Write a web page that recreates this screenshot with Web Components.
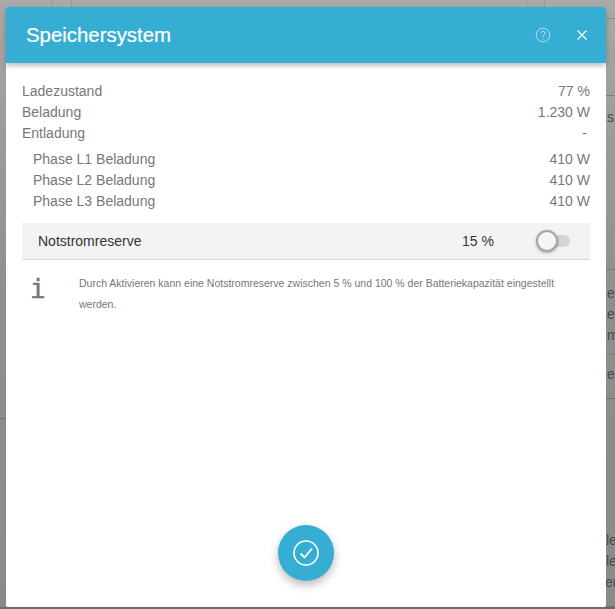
<!DOCTYPE html>
<html>
<head>
<meta charset="utf-8">
<title>Speichersystem</title>
<style>
    html, body { margin: 0; height: 100%; overflow: hidden; }
    body { font-family: "Liberation Sans", Arial, sans-serif; }
</style>
</head>
<body>
<page-backdrop>
    <storage-dialog heading="Speichersystem">
        <value-row label="Ladezustand" value="77 %"></value-row>
        <value-row label="Beladung" value="1.230 W"></value-row>
        <value-row label="Entladung" value="- " class="last"></value-row>
        <value-row label="Phase L1 Beladung" value="410 W" sub></value-row>
        <value-row label="Phase L2 Beladung" value="410 W" sub></value-row>
        <value-row label="Phase L3 Beladung" value="410 W" sub></value-row>
        <reserve-row label="Notstromreserve" value="15 %"></reserve-row>
        <info-note>Durch Aktivieren kann eine Notstromreserve zwischen 5 % und 100 % der Batteriekapazität eingestellt werden.</info-note>
    </storage-dialog>
</page-backdrop>

<script>
class PageBackdrop extends HTMLElement {
    constructor() {
        super()
        this.attachShadow({ mode: 'open' })
        // the dimmed page behind the dialog, only its edges are visible
        this.shadowRoot.innerHTML = `
            <style>
            :host {
                display: block;
                position: relative;
                width: 615px;
                height: 609px;
                overflow: hidden;
                background: linear-gradient(#aaaaaa, #a2a2a2 60px, #8e8e8e 300px, #8a8a8a);
            }
            .line { position: absolute; background: #8b8b8b; }
            .h { height: 1px; }
            .v { width: 1px; top: 0; height: 7px; background: #999; }
            .peek {
                position: absolute;
                left: 607px;
                color: #4a4a4a;
                font-size: 14px;
                line-height: 16px;
                white-space: nowrap;
            }
            </style>
            <div class="line v" style="left:52px"></div>
            <div class="line v" style="left:71px"></div>
            <div class="line v" style="left:526px"></div>
            <div class="line v" style="left:544px"></div>
            <div class="line h" style="left:545px;width:70px;top:18px"></div>
            <div class="line h" style="left:606px;width:9px;top:95px;background:#7d7d7d"></div>
            <div class="line h" style="left:606px;width:9px;top:269px;background:#7d7d7d"></div>
            <div class="line h" style="left:606px;width:9px;top:354px;background:#7d7d7d"></div>
            <div class="line h" style="left:606px;width:9px;top:398px;background:#6f6f6f"></div>
            <div class="line h" style="left:0;width:6px;top:418px;background:#6f6f6f"></div>
            <div class="line h" style="left:606px;width:9px;top:606px;background:#6f6f6f"></div>
            <div class="line h" style="left:0;width:615px;top:607px;height:2px;background:#6c6c6c"></div>
            <span class="peek" style="top:109px">s</span>
            <span class="peek" style="top:285px">e</span>
            <span class="peek" style="top:306px">e</span>
            <span class="peek" style="top:327px">m</span>
            <span class="peek" style="top:366px">e</span>
            <span class="peek" style="top:532px;left:606px">le</span>
            <span class="peek" style="top:553px;left:606px">le</span>
            <span class="peek" style="top:574px;left:605px">er</span>
            <slot></slot>
        `
    }
}

class StorageDialog extends HTMLElement {
    constructor() {
        super()
        this.attachShadow({ mode: 'open' })
        this.shadowRoot.innerHTML = `
            <style>
            :host {
                display: flex;
                flex-direction: column;
                position: absolute;
                left: 6px;
                top: 7px;
                width: 600px;
                height: 600px;
                background: #fff;
                border-radius: 2px;
            }
            header {
                flex: none;
                display: flex;
                align-items: center;
                height: 56px;
                padding: 0 18px 0 20px;
                background: #36add3;
                color: #fff;
                box-shadow: 0 3px 5px rgba(0,0,0,.25);
                border-radius: 2px 2px 0 0;
            }
            h1 { flex: 1; margin: 0; font-size: 20.4px; font-weight: 400; -webkit-text-stroke: .2px #fff; }
            svg { display: block; }
            .help { margin-right: 25px; }
            .body { flex: 1; padding: 18px 16px 0; }
            .fab {
                position: absolute;
                left: 272px;
                top: 518px;
                width: 56px;
                height: 56px;
                border-radius: 50%;
                background: #36add3;
                display: flex;
                align-items: center;
                justify-content: center;
                box-shadow: 0 4px 10px rgba(0,0,0,.28);
            }
            </style>
            <header>
                <h1 id="title"></h1>
                <svg class="help" width="16" height="16" viewBox="0 0 16 16" fill="none" stroke="#fff" stroke-opacity=".6">
                    <circle cx="8" cy="8" r="6.8"/>
                    <path d="M5.9 6.3a2.1 2.1 0 1 1 3.3 1.7c-.8.5-1.2 1-1.2 2"/>
                    <path d="M8 11.2v1.2"/>
                </svg>
                <svg width="12" height="12" viewBox="0 0 12 12" stroke="#fff" stroke-width="1.2">
                    <path d="M1.5 1.5l9 9M10.5 1.5l-9 9"/>
                </svg>
            </header>
            <div class="body"><slot></slot></div>
            <div class="fab">
                <svg width="28" height="28" viewBox="0 0 28 28" fill="none" stroke="#fff">
                    <circle cx="14" cy="14" r="12" stroke-width="1.6"/>
                    <path d="M8.5 14.5l4 4 7.5-9" stroke-width="1.8"/>
                </svg>
            </div>
        `
    }
    connectedCallback() {
        this.shadowRoot.getElementById("title").textContent = this.getAttribute("heading")
    }
}

class ValueRow extends HTMLElement {
    constructor() {
        super()
        this.attachShadow({ mode: 'open' })
        this.shadowRoot.innerHTML = `
            <style>
            :host {
                display: flex;
                justify-content: space-between;
                height: 21px;
                line-height: 21px;
                font-size: 14px;
                color: #777;
            }
            :host([sub]) { padding-left: 11px; }
            :host(.last) { margin-bottom: 5px; padding-right: 3px; }
            </style>
            <span id="label"></span><span id="value"></span>
        `
    }
    connectedCallback() {
        this.shadowRoot.getElementById("label").textContent = this.getAttribute("label")
        this.shadowRoot.getElementById("value").textContent = this.getAttribute("value")
    }
}

class ReserveRow extends HTMLElement {
    constructor() {
        super()
        this.attachShadow({ mode: 'open' })
        this.shadowRoot.innerHTML = `
            <style>
            :host {
                display: flex;
                align-items: center;
                height: 36px;
                margin-top: 11px;
                padding: 0 20px 0 16px;
                background: #f3f3f3;
                border-bottom: 1px solid #d8d8d8;
                font-size: 14px;
                color: #333;
            }
            #label { flex: 1; }
            #value { margin-right: 42px; }
            .toggle { position: relative; width: 34px; height: 22px; }
            .track {
                position: absolute;
                left: 6px;
                top: 5px;
                width: 28px;
                height: 12px;
                border-radius: 6px;
                background: #d4d4d4;
            }
            .knob {
                position: absolute;
                left: 0;
                top: 0;
                width: 18px;
                height: 18px;
                border: 2px solid #a6a6a6;
                border-radius: 50%;
                background: #f5f5f5;
                box-shadow: 0 1px 3px rgba(0,0,0,.3);
            }
            </style>
            <span id="label"></span><span id="value"></span>
            <div class="toggle"><div class="track"></div><div class="knob"></div></div>
        `
    }
    connectedCallback() {
        this.shadowRoot.getElementById("label").textContent = this.getAttribute("label")
        this.shadowRoot.getElementById("value").textContent = this.getAttribute("value")
    }
}

class InfoNote extends HTMLElement {
    constructor() {
        super()
        this.attachShadow({ mode: 'open' })
        this.shadowRoot.innerHTML = `
            <style>
            :host {
                display: flex;
                padding-top: 13px;
                color: #777;
            }
            .mark {
                flex: none;
                width: 57px;
                padding-left: 8px;
                box-sizing: border-box;
                font: 400 26px/32px "DejaVu Sans Mono", monospace;
                -webkit-text-stroke: .5px #777;
                color: #777;
            }
            .text { font-size: 10.5px; line-height: 21px; padding-right: 30px; }
            </style>
            <div class="mark">i</div>
            <div class="text"><slot></slot></div>
        `
    }
}

customElements.define('page-backdrop', PageBackdrop)
customElements.define('storage-dialog', StorageDialog)
customElements.define('value-row', ValueRow)
customElements.define('reserve-row', ReserveRow)
customElements.define('info-note', InfoNote)
</script>
</body>
</html>
